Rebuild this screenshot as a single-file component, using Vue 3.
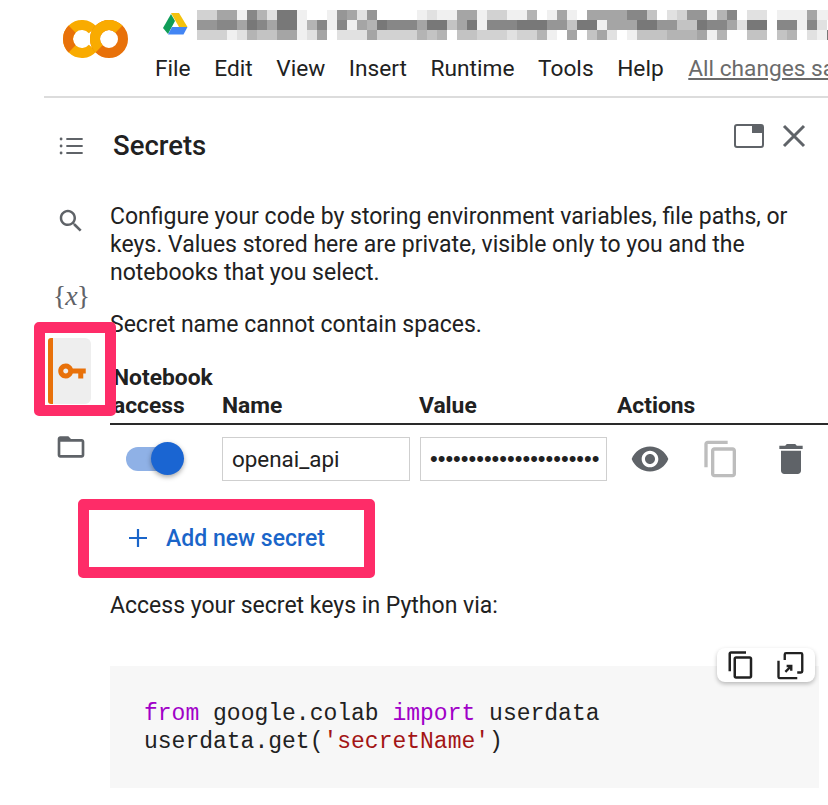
<template>
  <div class="page">
    <header class="topbar">
      <svg class="logo" viewBox="0 0 68 40" width="68" height="40">
        <path d="M30.7 11 A14 14 0 1 0 30.7 29" fill="none" stroke="#f9ab00" stroke-width="10" />
        <path d="M10.1 10.1 A14 14 0 0 0 10.1 29.9" fill="none" stroke="#e8710a" stroke-width="10" />
        <circle cx="47" cy="20" r="14" fill="none" stroke="#e8710a" stroke-width="10" />
        <path d="M37.1 29.9 A14 14 0 0 1 56.9 10.1" fill="none" stroke="#f9ab00" stroke-width="10" />
      </svg>
      <div class="doc">
        <div class="title-row">
          <svg class="drive" viewBox="0 0 26 23" width="26" height="23">
            <path d="M1 16 L9 2 L13 9 L6 22 Z" fill="#0f9d58" />
            <path d="M9 1 H17 L25.5 15 H17 Z" fill="#f4c20d" />
            <path d="M6 22.5 L10 15 H25.5 L21.5 22.5 Z" fill="#4285f4" />
          </svg>
          <div class="mosaic">
            <div v-for="(row, r) in mosaic" :key="r" class="mosaic-row">
              <span
                v-for="(cell, c) in row"
                :key="c"
                class="cell"
                :style="{ background: shade(cell) }"
              ></span>
            </div>
          </div>
        </div>
        <nav class="menu">
          <span v-for="item in menu" :key="item">{{ item }}</span>
          <span class="saved">All changes saved</span>
        </nav>
      </div>
    </header>

    <div class="body">
      <aside class="rail">
        <div class="rail-item">
          <svg viewBox="0 0 24 24" width="28" height="28" fill="#5f6368">
            <path d="M8 5.2h14v1.7H8zM8 11.2h14v1.7H8zM8 17.2h14v1.7H8z" />
            <circle cx="3.5" cy="6" r="1.2" />
            <circle cx="3.5" cy="12" r="1.2" />
            <circle cx="3.5" cy="18" r="1.2" />
          </svg>
        </div>
        <div class="rail-item">
          <svg viewBox="0 0 24 24" width="30" height="30" fill="#5f6368">
            <path d="M15.5 14h-.79l-.28-.27C15.41 12.59 16 11.11 16 9.5 16 5.91 13.09 3 9.5 3S3 5.91 3 9.5 5.91 16 9.5 16c1.61 0 3.09-.59 4.23-1.57l.27.28v.79l5 4.99L20.49 19l-4.99-5zm-6 0C7.01 14 5 11.99 5 9.5S7.01 5 9.5 5 14 7.01 14 9.5 11.99 14 9.5 14z" />
          </svg>
        </div>
        <div class="rail-item vars">{<i>x</i>}</div>
        <div class="rail-item">
          <div class="key-tab">
            <svg viewBox="0 0 24 24" width="30" height="30" fill="#e8710a">
              <path d="M12.65 10C11.83 7.67 9.61 6 7 6c-3.31 0-6 2.69-6 6s2.69 6 6 6c2.61 0 4.83-1.67 5.65-4H17v4h4v-4h2v-4H12.65zM7 14c-1.1 0-2-.9-2-2s.9-2 2-2 2 .9 2 2-.9 2-2 2z" />
            </svg>
          </div>
        </div>
        <div class="rail-item folder">
          <svg viewBox="0 0 24 24" width="32" height="32" fill="#5f6368">
            <path d="M20 6h-8l-2-2H4c-1.1 0-1.99.9-1.99 2L2 18c0 1.1.9 2 2 2h16c1.1 0 2-.9 2-2V8c0-1.1-.9-2-2-2zm0 12H4V8h16v10z" />
          </svg>
        </div>
      </aside>

      <main class="panel">
        <div class="panel-head">
          <h2>Secrets</h2>
          <div class="head-actions">
            <svg viewBox="0 0 30 24" width="30" height="24">
              <rect x="1" y="1" width="28" height="22" rx="2" fill="none" stroke="#5f6368" stroke-width="2" />
              <rect x="18" y="1" width="11" height="8" fill="#5f6368" />
            </svg>
            <svg viewBox="0 0 24 24" width="24" height="24" class="close">
              <path d="M2 2 L22 22 M22 2 L2 22" stroke="#5f6368" stroke-width="3" fill="none" />
            </svg>
          </div>
        </div>

        <p class="intro">
          Configure your code by storing environment variables, file paths, or keys. Values stored
          here are private, visible only to you and the notebooks that you select.
        </p>
        <p class="hint">Secret name cannot contain spaces.</p>

        <div class="table-head">
          <span>Notebook access</span>
          <span>Name</span>
          <span>Value</span>
          <span>Actions</span>
        </div>
        <div class="table-row">
          <div class="toggle"><span class="knob"></span></div>
          <div class="field">openai_api</div>
          <div class="field dots">••••••••••••••••••••••</div>
          <div class="row-actions">
            <svg viewBox="0 0 24 24" width="40" height="40" fill="#5f6368">
              <path d="M12 4.5C7 4.5 2.73 7.61 1 12c1.73 4.39 6 7.5 11 7.5s9.27-3.11 11-7.5c-1.73-4.39-6-7.5-11-7.5zM12 17c-2.76 0-5-2.24-5-5s2.24-5 5-5 5 2.24 5 5-2.24 5-5 5zm0-8c-1.66 0-3 1.34-3 3s1.34 3 3 3 3-1.34 3-3-1.34-3-3-3z" />
            </svg>
            <svg viewBox="0 0 24 24" width="40" height="40" fill="#bdbdbd">
              <path d="M16 1H4c-1.1 0-2 .9-2 2v14h2V3h12V1zm3 4H8c-1.1 0-2 .9-2 2v14c0 1.1.9 2 2 2h11c1.1 0 2-.9 2-2V7c0-1.1-.9-2-2-2zm0 16H8V7h11v14z" />
            </svg>
            <svg viewBox="0 0 24 24" width="40" height="40" fill="#5f6368">
              <path d="M6 19c0 1.1.9 2 2 2h8c1.1 0 2-.9 2-2V7H6v12zM19 4h-3.5l-1-1h-5l-1 1H5v2h14V4z" />
            </svg>
          </div>
        </div>

        <button class="add-btn">
          <svg viewBox="0 0 20 20" width="20" height="20">
            <path d="M10 1v18M1 10h18" stroke="#1a65c9" stroke-width="2.2" fill="none" />
          </svg>
          <span>Add new secret</span>
        </button>

        <p class="access">Access your secret keys in Python via:</p>

        <div class="code-wrap">
          <div class="code-tools">
            <svg viewBox="0 0 24 24" width="30" height="30" fill="#212121">
              <path d="M16 1H4c-1.1 0-2 .9-2 2v14h2V3h12V1zm3 4H8c-1.1 0-2 .9-2 2v14c0 1.1.9 2 2 2h11c1.1 0 2-.9 2-2V7c0-1.1-.9-2-2-2zm0 16H8V7h11v14z" />
            </svg>
            <svg viewBox="0 0 24 24" width="30" height="30" fill="none" stroke="#212121" stroke-width="1.9">
              <path d="M7 8V3.5a1 1 0 0 1 1-1h12a1 1 0 0 1 1 1V17a1 1 0 0 1-1 1h-3" />
              <path d="M2 8.5v13a1 1 0 0 0 1 1h14" />
              <path d="M7.5 17.5 L12 13 M8.5 12.8 H12.2 V16.5" />
            </svg>
          </div>
          <pre class="code"><span class="kw">from</span> google.colab <span class="kw">import</span> userdata
userdata.get(<span class="str">'secretName'</span>)</pre>
        </div>
      </main>
    </div>

    <div class="mark mark-key"></div>
    <div class="mark mark-add"></div>
  </div>
</template>

<script setup>
const menu = ['File', 'Edit', 'View', 'Insert', 'Runtime', 'Tools', 'Help']

// blurred document name, one digit per 10px block (0 dark .. 9 white)
const mosaic = [
  '6633814700899823729999878833866884983893333115976228419779888388',
  '2211301300841818340111300530811100022500833300225501137009118179',
  '6668745533873977736666454955666766489395379855544438499559549780'
]

const shade = (d) => `rgb(${120 + d * 15}, ${120 + d * 15}, ${120 + d * 15})`
</script>

<style>
html,
body {
  background: #fff;
}
</style>

<style scoped>
.page {
  position: relative;
  width: 828px;
  height: 805px;
  overflow: hidden;
  background: #fff;
  font-family: Roboto, "Liberation Sans", sans-serif;
  color: #212121;
}

.topbar {
  display: flex;
  height: 96px;
  margin-left: 44px;
  border-bottom: 2px solid #dcdcdc;
}

.logo {
  margin: 19px 0 0 18px;
  flex-shrink: 0;
}

.doc {
  margin-left: 25px;
  min-width: 0;
  flex: 1;
}

.title-row {
  display: flex;
  height: 45px;
  margin-top: 10px;
  overflow: hidden;
}

.drive {
  margin: 2px 0 0 7px;
  flex-shrink: 0;
}

.mosaic {
  margin-left: 9px;
  filter: blur(0.7px);
}

.mosaic-row {
  display: flex;
  height: 10px;
}

.cell {
  width: 10px;
  flex-shrink: 0;
}

.menu {
  display: flex;
  gap: 23.6px;
  font-size: 22.7px;
  line-height: 28px;
  white-space: nowrap;
}

.saved {
  color: #6b6b6b;
  text-decoration: underline;
  margin-left: 1px;
}

.body {
  display: flex;
}

.rail {
  width: 66px;
  box-sizing: border-box;
  margin-left: 44px;
  padding: 10px 12px 0 0;
  flex-shrink: 0;
}

.rail-item {
  height: 75px;
  display: flex;
  align-items: center;
  justify-content: center;
}

.folder {
  padding-top: 1px;
}

.vars {
  font-family: "Liberation Serif", serif;
  font-size: 28px;
  letter-spacing: -1px;
  color: #5f6368;
}

.key-tab {
  flex-shrink: 0;
  width: 43px;
  height: 66px;
  margin-right: 4px;
  background: #eeeeee;
  border-left: 5px solid #e8710a;
  border-radius: 3px 6px 6px 3px;
  display: flex;
  align-items: center;
  justify-content: center;
  box-sizing: border-box;
}

.panel {
  flex: 1;
  min-width: 0;
}

.panel-head {
  display: flex;
  justify-content: space-between;
  align-items: center;
  height: 54px;
  margin-top: 20px;
  padding: 0 22px 0 3px;
}

.panel-head h2 {
  margin: 0;
  font-size: 27.5px;
  font-weight: 500;
}

.head-actions {
  display: flex;
  align-items: center;
  gap: 18px;
  margin-top: -18px;
}

.close {
  width: 24px;
}

.intro {
  margin: 31px 30px 0 0;
  font-size: 23px;
  line-height: 28px;
}

.hint {
  margin: 24px 0 0;
  font-size: 23px;
  line-height: 28px;
}

.table-head {
  display: grid;
  grid-template-columns: 109px 197px 198px auto;
  align-items: end;
  margin-top: 25px;
  padding: 0 0 3px 3px;
  border-bottom: 2px solid #2a2a2a;
  font-size: 22.8px;
  font-weight: 700;
  line-height: 28px;
}

.table-row {
  display: grid;
  grid-template-columns: 112px 198px 197px auto;
  align-items: center;
  margin-top: 12px;
}

.toggle {
  position: relative;
  width: 49px;
  height: 24px;
  margin-left: 16px;
  border-radius: 12px;
  background: #8fb1e6;
}

.knob {
  position: absolute;
  right: -9px;
  top: -5px;
  width: 33px;
  height: 33px;
  border-radius: 50%;
  background: #1a65d2;
  box-shadow: 0 2px 5px rgba(0, 0, 0, 0.35);
}

.field {
  width: 188px;
  height: 44px;
  box-sizing: border-box;
  border: 1.5px solid #cfcfcf;
  padding-left: 9px;
  font-size: 22.4px;
  line-height: 42px;
  overflow: hidden;
  white-space: nowrap;
}

.dots {
  font-family: "Liberation Sans", sans-serif;
  font-size: 22px;
  width: 187px;
}

.row-actions {
  display: flex;
  gap: 30.5px;
  margin-left: 13px;
}

.add-btn {
  display: flex;
  align-items: center;
  gap: 18px;
  margin: 39px 0 0 18px;
  padding: 0;
  height: 36px;
  border: 0;
  background: none;
  color: #1a65c9;
  font-family: inherit;
  font-size: 23px;
  font-weight: 500;
}

.access {
  margin: 36px 0 0;
  font-size: 23px;
  line-height: 28px;
}

.code-wrap {
  position: relative;
  width: 709px;
  height: 122px;
  margin-top: 46px;
  background: #f7f7f7;
}

.code-tools {
  position: absolute;
  top: -18px;
  right: 4px;
  width: 98px;
  height: 34px;
  display: flex;
  justify-content: space-between;
  align-items: center;
  box-sizing: border-box;
  padding: 0 9px;
  background: #fff;
  border-radius: 8px;
  box-shadow: 0 2px 4px rgba(0, 0, 0, 0.25);
}

.code {
  margin: 0;
  padding: 34px 34px 0;
  font-family: "Liberation Mono", monospace;
  font-size: 23px;
  line-height: 28px;
  color: #212121;
}

.kw {
  color: #a000c8;
}

.str {
  color: #a31515;
}

.mark {
  position: absolute;
  box-sizing: border-box;
  border: 11px solid #fe2c68;
  border-radius: 5px;
  pointer-events: none;
}

.mark-key {
  left: 34px;
  top: 322px;
  width: 82px;
  height: 94px;
}

.mark-add {
  left: 78px;
  top: 499px;
  width: 297px;
  height: 79px;
}
</style>
